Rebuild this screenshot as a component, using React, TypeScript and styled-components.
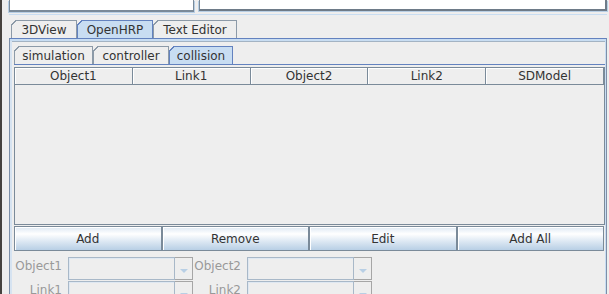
import styled, { createGlobalStyle } from 'styled-components'

const GlobalStyle = createGlobalStyle`
  html, body {
    margin: 0;
    padding: 0;
    background: #eeeeee;
    overflow: hidden;
  }
  body {
    font-family: "DejaVu Sans", "Liberation Sans", sans-serif;
    font-size: 12px;
    color: #333333;
  }
`

const Frame = styled.div`
  display: flex;
  width: 609px;
  height: 294px;
  overflow: hidden;
  background: #eeeeee;
`

const Edge = styled.div`
  flex: 0 0 2px;
  background: #46423e;
`

const Main = styled.div`
  flex: 1;
  min-width: 0;
  display: flex;
  flex-direction: column;
  padding-left: 7px;
  padding-right: 2px;
`

const TopRow = styled.div`
  flex: 0 0 15px;
  display: flex;
  gap: 5px;
  border-bottom: 1px solid #c8ddf2;
  box-sizing: border-box;
`

const TextArea = styled.div<{ $main?: boolean }>`
  box-sizing: border-box;
  height: ${(p) => (p.$main ? 11 : 12)}px;
  flex: ${(p) => (p.$main ? '1' : '0 0 185px')};
  background: #ffffff;
  border-left: 1px solid #7a8a99;
  border-right: ${(p) => (p.$main ? '2px solid #6e7b88' : '1px solid #7a8a99')};
  border-bottom: 2px solid ${(p) => (p.$main ? '#6e7b88' : '#7a8a99')};
  box-shadow: -1px 1px 0 #b8cfe5, 1px 1px 0 #b8cfe5;
`

const Tabs = styled.div<{ $inner?: boolean }>`
  display: flex;
  flex-direction: column;
  flex: 1;
  min-height: 0;
  margin-top: ${(p) => (p.$inner ? 3 : 5)}px;
`

const Strip = styled.div<{ $inner?: boolean }>`
  display: flex;
  align-items: flex-end;
  height: 18px;
  flex: 0 0 18px;
  padding-left: ${(p) => (p.$inner ? 0 : 2)}px;
`

const Tab = styled.div<{ $active?: boolean; $w: number }>`
  position: relative;
  box-sizing: border-box;
  width: ${(p) => p.$w}px;
  height: 18px;
  border: 1px solid ${(p) => (p.$active ? '#6382bf' : '#8c9aa8')};
  border-bottom: none;
  background: ${(p) => (p.$active ? '#c8ddf2' : '#eeeeee')};
  text-align: center;
  line-height: 18px;
  white-space: nowrap;
  &::before {
    content: '';
    position: absolute;
    top: -1px;
    left: -1px;
    width: 6px;
    height: 6px;
    background: linear-gradient(
      135deg,
      #eeeeee 0,
      #eeeeee 3.1px,
      ${(p) => (p.$active ? '#6382bf' : '#8c9aa8')} 3.1px,
      ${(p) => (p.$active ? '#6382bf' : '#8c9aa8')} 4.3px,
      transparent 4.3px
    );
  }
`

const MainPanel = styled.div`
  flex: 1;
  min-height: 0;
  display: flex;
  flex-direction: column;
  border-top: 1px solid #6382bf;
  border-left: 1px solid #7d8fa8;
  border-right: 1px solid #7d8fa8;
  padding: 2px 1px 0 4px;
  box-shadow: inset 0 2px 0 #c8ddf2, inset 2px 0 0 #d6e3f1, inset -1px 0 0 #c8ddf2;
`

const InnerLine = styled.div`
  height: 1px;
  flex: 0 0 1px;
  margin-left: -2px;
  background: #a3b3c3;
`

const InnerStrip = styled(Strip)`
  border-bottom: 1px solid #6382bf;
  flex-basis: 19px;
  height: 19px;
`

const Body = styled.div`
  flex: 1;
  min-height: 0;
  display: flex;
  flex-direction: column;
  padding-top: 2px;
`

const Table = styled.div`
  box-sizing: border-box;
  height: 158px;
  flex: 0 0 158px;
  border: 1px solid #7a8a99;
  display: flex;
  flex-direction: column;
`

const Header = styled.div`
  display: grid;
  grid-template-columns: repeat(5, 1fr);
  height: 16px;
  border-bottom: 1px solid #7a8a99;
`

const HeadCell = styled.div`
  border-right: 1px solid #7a8a99;
  box-shadow: inset 1px 1px 0 #ffffff;
  text-align: center;
  line-height: 16px;
`

const Buttons = styled.div`
  display: flex;
  height: 25px;
  flex: 0 0 25px;
  margin-top: 1px;
  padding-right: 1px;
`

const Button = styled.button`
  flex: 1;
  box-sizing: border-box;
  margin: 0;
  padding: 0;
  border: 1px solid #7a8a99;
  background: linear-gradient(to bottom, #dde8f3 0%, #ffffff 30%, #dde8f3 62%, #b8cfe5 100%);
  font: inherit;
  color: #333333;
  box-shadow: inset 1px 1px 0 #ffffff;
`

const Form = styled.div`
  display: grid;
  grid-template-columns: 54px 125px 54px 125px;
  row-gap: 1px;
  margin-top: 6px;
`

const Label = styled.div`
  color: #999999;
  text-align: right;
  padding-right: 6px;
  line-height: 19px;
  white-space: nowrap;
`

const Combo = styled.div`
  display: flex;
  height: 23px;
`

const Field = styled.div`
  flex: 1;
  border: 1px solid #a8b8c8;
  box-shadow: inset 1px 1px 0 #dfe8f2;
  background: #eeeeee;
`

const Arrow = styled.div`
  flex: 0 0 18px;
  box-sizing: border-box;
  border: 1px solid #a6a6a6;
  border-left: none;
  display: flex;
  align-items: center;
  justify-content: center;
  padding-top: 4px;
  &::after {
    content: '';
    width: 0;
    height: 0;
    border-left: 4.5px solid transparent;
    border-right: 4.5px solid transparent;
    border-top: 4px solid #b8cfe5;
  }
`

const columns = ['Object1', 'Link1', 'Object2', 'Link2', 'SDModel']
const actions = ['Add', 'Remove', 'Edit', 'Add All']
const fields = [
  ['Object1', 'Object2'],
  ['Link1', 'Link2'],
]

export default function App() {
  return (
    <>
      <GlobalStyle />
      <Frame>
        <Edge />
        <Main>
          <TopRow>
            <TextArea />
            <TextArea $main />
          </TopRow>
          <Tabs>
            <Strip>
              <Tab $w={66}>3DView</Tab>
              <Tab $w={76} $active>OpenHRP</Tab>
              <Tab $w={84}>Text Editor</Tab>
            </Strip>
            <MainPanel>
              <InnerLine />
              <Tabs $inner>
                <InnerStrip $inner>
                  <Tab $w={79}>simulation</Tab>
                  <Tab $w={76}>controller</Tab>
                  <Tab $w={64} $active>collision</Tab>
                </InnerStrip>
                <Body>
                  <Table>
                    <Header>
                      {columns.map((c) => (
                        <HeadCell key={c}>{c}</HeadCell>
                      ))}
                    </Header>
                  </Table>
                  <Buttons>
                    {actions.map((a) => (
                      <Button key={a}>{a}</Button>
                    ))}
                  </Buttons>
                  <Form>
                    {fields.map((row) =>
                      row.map((name) => [
                        <Label key={name}>{name}</Label>,
                        <Combo key={name + '-box'}>
                          <Field />
                          <Arrow />
                        </Combo>,
                      ])
                    )}
                  </Form>
                </Body>
              </Tabs>
            </MainPanel>
          </Tabs>
        </Main>
      </Frame>
    </>
  )
}
